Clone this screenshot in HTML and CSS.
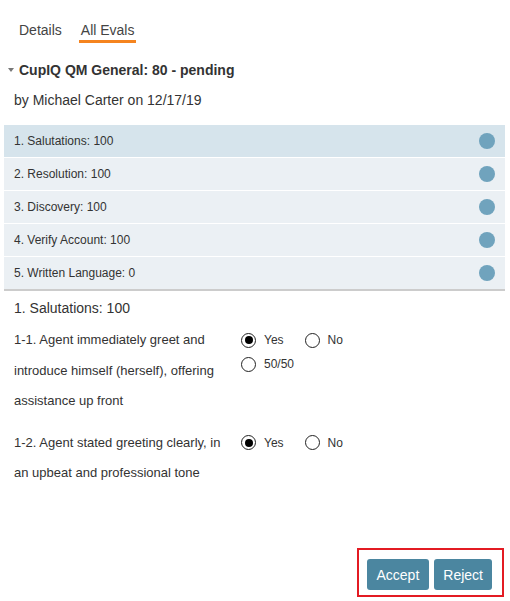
FILE: index.html
```html
<!DOCTYPE html>
<html lang="en">
<head>
    <meta charset="UTF-8">
    <title>All Evals</title>
    <link rel="stylesheet" href="styles.css">
</head>
<body>
    <div class="page">
        <div class="tabs">
            <span class="tab">Details</span>
            <span class="tab active">All Evals</span>
        </div>

        <div class="eval-title"><span class="caret"></span>CupIQ QM General: 80 - pending</div>
        <div class="eval-by">by Michael Carter on 12/17/19</div>

        <ul class="sections">
            <li class="selected">1. Salutations: 100<span class="dot"></span></li>
            <li>2. Resolution: 100<span class="dot"></span></li>
            <li>3. Discovery: 100<span class="dot"></span></li>
            <li>4. Verify Account: 100<span class="dot"></span></li>
            <li>5. Written Language: 0<span class="dot"></span></li>
        </ul>

        <div class="section-name">1. Salutations: 100</div>

        <div class="question">
            <div class="q-text">1-1. Agent immediately greet and introduce himself (herself), offering assistance up front</div>
            <div class="options">
                <span class="option"><span class="radio checked"></span>Yes</span>
                <span class="option"><span class="radio"></span>No</span>
                <span class="option"><span class="radio"></span>50/50</span>
            </div>
        </div>

        <div class="question">
            <div class="q-text">1-2. Agent stated greeting clearly, in an upbeat and professional tone</div>
            <div class="options">
                <span class="option"><span class="radio checked"></span>Yes</span>
                <span class="option"><span class="radio"></span>No</span>
            </div>
        </div>

        <div class="actions">
            <div class="action-box">
                <button class="btn">Accept</button>
                <button class="btn">Reject</button>
            </div>
        </div>
    </div>
</body>
</html>
```

FILE: styles.css
```css
body {
    margin: 0;
    font-family: "Liberation Sans", Arial, sans-serif;
    color: #333;
    background: #fff;
}
.page {
    height: 601px;
    display: flex;
    flex-direction: column;
    box-sizing: border-box;
}
.tabs {
    display: flex;
    gap: 15px;
    padding: 22px 0 0 17px;
    font-size: 14px;
}
.tab {
    color: #444;
    padding: 0 2px 1px;
    border-bottom: 3px solid transparent;
    line-height: 17px;
}
.tab.active {
    border-bottom-color: #f5841f;
}
.eval-title {
    display: flex;
    align-items: center;
    margin-top: 19px;
    padding-left: 8px;
    font-size: 14px;
    font-weight: bold;
    line-height: 17px;
}
.caret {
    width: 0;
    height: 0;
    border-left: 3.5px solid transparent;
    border-right: 3.5px solid transparent;
    border-top: 4px solid #777;
    margin-right: 5px;
    margin-top: -2px;
}
.eval-by {
    margin-top: 13px;
    padding-left: 14px;
    font-size: 14px;
    line-height: 17px;
}
.sections {
    list-style: none;
    margin: 16px 5px 0 4px;
    padding: 0;
    border-bottom: 2px solid #ccc;
}
.sections li {
    display: flex;
    justify-content: space-between;
    align-items: center;
    height: 32px;
    padding: 0 10px 0 10px;
    background: #ebf0f4;
    border-top: 1px solid #fff;
    font-size: 12px;
}
.sections li:first-child {
    border-top: none;
}
.sections li.selected {
    background: #d6e4ec;
}
.dot {
    width: 16px;
    height: 16px;
    border-radius: 50%;
    background: #70a3bd;
}
.section-name {
    margin-top: 9px;
    padding-left: 14px;
    font-size: 14px;
    line-height: 17px;
}
.question {
    display: flex;
    padding-left: 14px;
    margin-top: 8px;
    margin-bottom: 3px;
}
.q-text {
    width: 216px;
    margin-right: 11px;
    font-size: 13px;
    line-height: 30.5px;
}
.options {
    display: flex;
    flex-wrap: wrap;
    width: 150px;
    align-content: flex-start;
    padding-top: 3px;
}
.option {
    display: flex;
    align-items: center;
    height: 24px;
    margin-right: 21px;
    font-size: 12px;
}
.radio {
    width: 13px;
    height: 13px;
    border: 1.5px solid #222;
    border-radius: 50%;
    margin-right: 8px;
    position: relative;
}
.radio.checked::after {
    content: "";
    position: absolute;
    left: 2.5px;
    top: 2.5px;
    width: 8px;
    height: 8px;
    border-radius: 50%;
    background: #000;
}
.actions {
    margin-top: auto;
    display: flex;
    justify-content: flex-end;
    padding: 0 6px 4px 0;
}
.action-box {
    display: flex;
    gap: 5px;
    border: 2px solid #e31b23;
    padding: 9px 10px 5px 8px;
}
.btn {
    font-family: "Liberation Sans", Arial, sans-serif;
    font-size: 14px;
    color: #fff;
    background: #4b86a0;
    border: none;
    border-radius: 3px;
    height: 31px;
    padding: 0 10px;
}
.btn + .btn {
    padding: 0 9px;
}
```
